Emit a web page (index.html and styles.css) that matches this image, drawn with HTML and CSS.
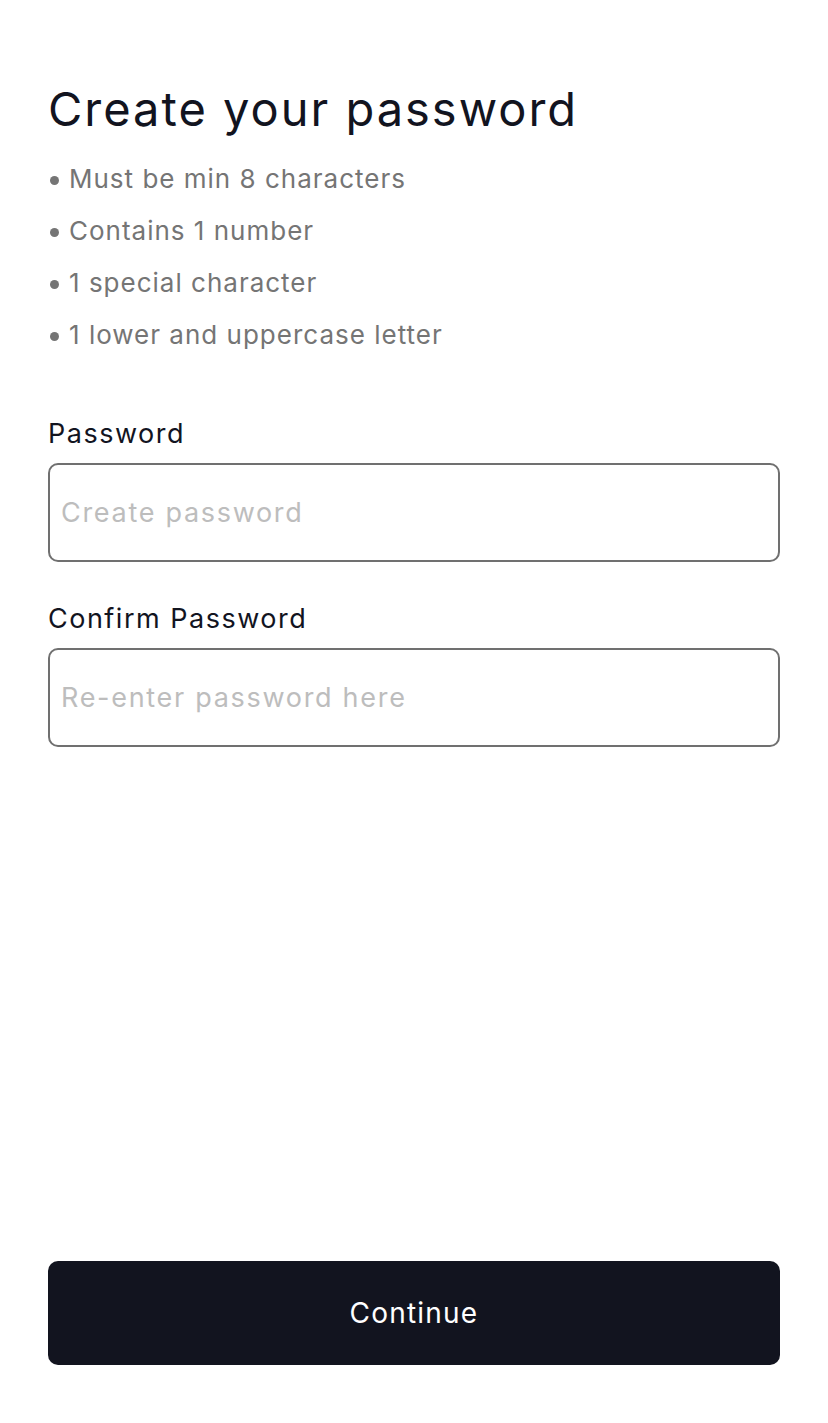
FILE: index.html
```html
<!DOCTYPE html>
<html lang="en">
<head>
  <meta charset="UTF-8" />
  <meta name="viewport" content="width=device-width, initial-scale=1.0"/>
  <title>Create your password</title>
  <link rel="stylesheet" href="styles.css">
</head>
<body>
  <div class="screen">
    <div class="content">
      <h1>Create your password</h1>

      <ul class="rules">
        <li>Must be min 8 characters</li>
        <li>Contains 1 number</li>
        <li>1 special character</li>
        <li>1 lower and uppercase letter</li>
      </ul>

      <label class="field">
        <span class="field-label">Password</span>
        <input type="password" placeholder="Create password">
      </label>

      <label class="field">
        <span class="field-label">Confirm Password</span>
        <input type="password" placeholder="Re-enter password here">
      </label>
    </div>

    <button class="continue">Continue</button>
  </div>
</body>
</html>
```

FILE: styles.css
```css
* {
  box-sizing: border-box;
}
html, body {
  margin: 0;
  height: 100%;
}
body {
  font-family: Inter, "Noto Sans", sans-serif;
  background: #ffffff;
  color: #12141f;
}
.screen {
  height: 100%;
  display: flex;
  flex-direction: column;
  justify-content: space-between;
  padding: 80px 48px 58px;
}
h1 {
  margin: 0 0 15px;
  font-size: 47px;
  font-weight: 400;
  line-height: 58px;
  letter-spacing: 2px;
  color: #12141f;
}
.rules {
  list-style: none;
  margin: 0 0 56px;
  padding: 0;
}
.rules li {
  font-size: 26px;
  line-height: 52px;
  letter-spacing: 1px;
  color: #757575;
  display: flex;
  align-items: center;
}
.rules li::before {
  content: "";
  width: 9px;
  height: 9px;
  border-radius: 50%;
  background: #757575;
  margin: 2px 10px 0 2px;
}
.field {
  display: flex;
  flex-direction: column;
  gap: 12px;
  margin-bottom: 40px;
}
.field-label {
  font-size: 27px;
  line-height: 34px;
  letter-spacing: 1.5px;
  color: #12141f;
}
.field input {
  height: 99px;
  border: 2px solid #707070;
  border-radius: 10px;
  padding: 0 11px;
  font-family: inherit;
  font-size: 27px;
  letter-spacing: 1.7px;
  color: #12141f;
  outline: none;
}
.field input::placeholder {
  color: #bdbdbd;
}
.continue {
  width: 100%;
  height: 104px;
  border: none;
  border-radius: 10px;
  background: #12141f;
  color: #ffffff;
  font-family: inherit;
  font-size: 28px;
  letter-spacing: 1.2px;
  cursor: pointer;
}
```
